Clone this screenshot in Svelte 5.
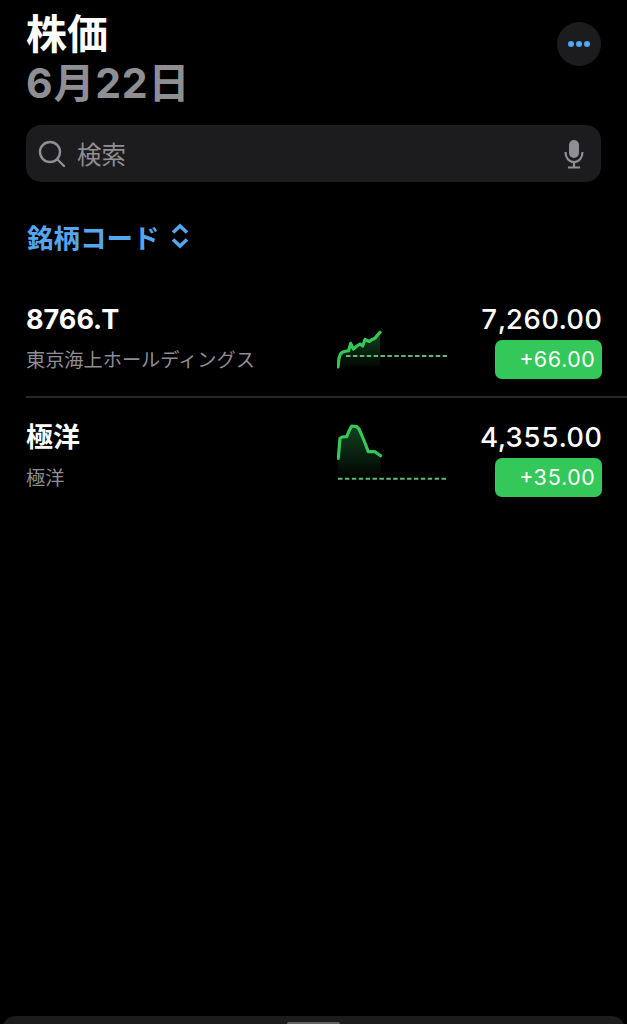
<script>
  const stocks = [
    {
      symbol: '8766.T',
      name: '東京海上ホールディングス',
      price: '7,260.00',
      change: '+66.00',
      line: 'M1 67 L2 58 L3.5 54 L5.7 52 L9.7 51 L11.5 51 L13.7 43.3 L16.3 49 L20 46 L23 44 L25.7 46 L28 39.5 L32.3 41.5 L35 39.5 L38 38.3 L40.5 35 L43 32.3',
      base: 56,
      baseStart: 8,
      floor: 66
    },
    {
      symbol: '極洋',
      name: '極洋',
      price: '4,355.00',
      change: '+35.00',
      line: 'M1.3 40.3 L3 20.3 L5 19 L9.7 18.7 L12 13 L14.7 8 L19.7 8.7 L22 11 L24.7 17 L28 25 L31.3 33.7 L34 33.7 L38 33.7 L40.5 35.5 L43.5 37.7',
      base: 60.7,
      baseStart: 0,
      floor: 58
    }
  ];
</script>

<div class="page">
  <header class="top">
    <div class="titles">
      <h1>株価</h1>
      <h2>6月22日</h2>
    </div>
    <button class="more" aria-label="その他">
      <svg width="24" height="8" viewBox="0 0 24 8">
        <circle cx="4" cy="4" r="3" />
        <circle cx="12" cy="4" r="3" />
        <circle cx="20" cy="4" r="3" />
      </svg>
    </button>
  </header>

  <div class="search">
    <svg class="glass" width="28" height="28" viewBox="0 0 28 28" fill="none">
      <circle cx="12" cy="12" r="10" />
      <path d="M19.5 19.5 L26 26" />
    </svg>
    <span class="placeholder">検索</span>
    <svg class="mic" width="20" height="30" viewBox="0 0 20 30" fill="none">
      <rect class="capsule" x="5" y="1" width="10" height="18" rx="5" />
      <path d="M1.5 13 C1.5 19 5 23 10 23 C15 23 18.5 19 18.5 13 M10 23 V28 M4 28.5 H16" />
    </svg>
  </div>

  <div class="sort">
    <span>銘柄コード</span>
    <svg width="18" height="26" viewBox="0 0 18 26" fill="none">
      <path d="M2 9.5 L9 3 L16 9.5 M2 16.5 L9 23 L16 16.5" />
    </svg>
  </div>

  <ul class="list">
    {#each stocks as s, i}
      <li class="row">
        <div class="info">
          <div class="symbol">{s.symbol}</div>
          <div class="name">{s.name}</div>
        </div>
        <svg class="chart" width="112" height="90" viewBox="0 0 112 90" fill="none">
          <defs>
            <linearGradient id="fade{i}" x1="0" y1="0" x2="0" y2="1">
              <stop offset="0" stop-color="#34c759" stop-opacity="0.34" />
              <stop offset="1" stop-color="#34c759" stop-opacity="0.03" />
            </linearGradient>
          </defs>
          <path d="{s.line} V{s.floor} H1 Z" fill="url(#fade{i})" />
          <path d="M{s.baseStart + 1} {s.base} H111" class="base" />
          <path d={s.line} class="line" />
        </svg>
        <div class="quote">
          <div class="price">{s.price}</div>
          <div class="badge">{s.change}</div>
        </div>
      </li>
    {/each}
  </ul>

  <div class="sheet"><span class="grabber"></span></div>
</div>

<style>
  :global(body) {
    background: #000;
  }

  .page {
    position: relative;
    height: 1024px;
    overflow: hidden;
    background: #000;
    color: #fff;
    font-family: Inter, "Noto Sans CJK JP", sans-serif;
  }

  .top {
    display: flex;
    justify-content: space-between;
    align-items: flex-start;
    padding: 10px 26px 0 26px;
  }

  h1, h2 {
    margin: 0;
    font-size: 41px;
    line-height: 48px;
    font-weight: 700;
  }

  h2 {
    color: #8e8e93;
    margin-top: 1px;
    letter-spacing: 0.8px;
  }

  .more {
    width: 44px;
    height: 44px;
    margin-top: 12px;
    padding: 0;
    border: none;
    border-radius: 50%;
    background: #1c1c1e;
    display: flex;
    align-items: center;
    justify-content: center;
  }

  .more circle {
    fill: #55a6ee;
  }

  .search {
    display: flex;
    align-items: center;
    height: 57px;
    margin: 18px 26px 0 26px;
    padding: 0 17px 0 12px;
    border-radius: 15px;
    background: #1c1c1e;
  }

  .glass circle, .glass path {
    stroke: #8e8e93;
    stroke-width: 2.4;
    stroke-linecap: round;
  }

  .placeholder {
    margin-left: 11px;
    flex: 1;
    font-size: 24.5px;
    color: #8e8e93;
  }

  .mic path {
    stroke: #8e8e93;
    stroke-width: 2.2;
  }

  .mic .capsule {
    fill: #8e8e93;
  }

  .sort {
    display: flex;
    align-items: center;
    gap: 11px;
    margin: 37px 26px 0 27px;
    height: 34px;
    font-size: 26.5px;
    font-weight: 700;
    color: #55a6ee;
  }

  .sort path {
    stroke: #55a6ee;
    stroke-width: 3.6;
  }

  .list {
    list-style: none;
    margin: 25px 0 0 0;
    padding: 0;
  }

  .row {
    display: grid;
    grid-template-columns: 311px 112px 1fr;
    height: 118px;
    box-sizing: border-box;
    padding: 0 25px 0 26px;
  }

  .row + .row {
    background: linear-gradient(#262628, #262628) no-repeat 26px 0 / 100% 2px;
  }

  .info, .quote {
    padding-top: 23px;
  }

  .symbol {
    padding-top: 1px;
    font-size: 27px;
    line-height: 36px;
    font-weight: 700;
  }

  .name {
    margin-top: 4px;
    font-size: 19.2px;
    line-height: 36px;
    color: #8e8e93;
  }

  .chart {
    margin-top: 22px;
  }

  .base {
    stroke: #5dbb76;
    stroke-width: 2;
    stroke-dasharray: 4.5 2.4;
  }

  .line {
    stroke: #34c759;
    stroke-width: 3.2;
    stroke-linejoin: round;
    stroke-linecap: round;
  }

  .quote {
    text-align: right;
  }

  .price {
    font-size: 27.5px;
    line-height: 36px;
    font-weight: 500;
    font-variant-numeric: tabular-nums;
  }

  .badge {
    width: 107px;
    height: 39px;
    margin: 3px 0 0 auto;
    padding-right: 7px;
    box-sizing: border-box;
    border-radius: 7px;
    background: #34c759;
    font-size: 21.5px;
    line-height: 39px;
    font-weight: 400;
    font-variant-numeric: tabular-nums;
  }

  .sheet {
    position: absolute;
    left: 2px;
    right: 2px;
    top: 1016px;
    height: 20px;
    border-radius: 14px 14px 0 0;
    background: #1c1c1e;
    display: flex;
    justify-content: center;
  }

  .grabber {
    width: 53px;
    height: 3px;
    margin-top: 6px;
    border-radius: 2px;
    background: #636366;
  }
</style>
